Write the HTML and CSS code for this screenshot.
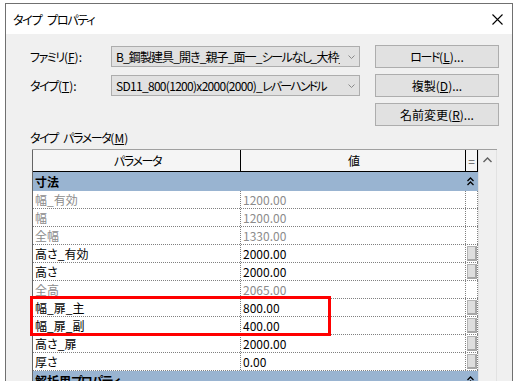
FILE: index.html
```html
<!DOCTYPE html>
<html lang="ja">
<head>
  <meta charset="UTF-8" />
  <title>タイプ プロパティ</title>
  <link rel="stylesheet" href="styles.css">
</head>
<body>

  <div class="window">
    <div class="titlebar">
      <span class="title">タイプ プロパティ</span>
      <svg class="close" width="11" height="11" viewBox="0 0 11 11"><path d="M0.5 0.5 L10.5 10.5 M10.5 0.5 L0.5 10.5" stroke="#000" stroke-width="1.1" fill="none"/></svg>
    </div>

    <div class="content">
      <div class="selectors">
        <label><span class="kn">ファミリ</span>(<u>F</u>):</label>
        <div class="combo">
          <span class="combo-text tight">B_鋼製建具_開き_親子_面一_<span class="kn">シールなし</span>_大枠_枠見込100</span>
          <svg class="chev" width="7" height="4" viewBox="0 0 7 4"><path d="M0.5 0.5 L3.5 3.5 L6.5 0.5" stroke="#8a8a8a" fill="none"/></svg>
        </div>
        <button class="btn"><span class="kn">ロード</span>(<u>L</u>)...</button>

        <label><span class="kn">タイプ</span>(<u>T</u>):</label>
        <div class="combo">
          <span class="combo-text latin">SD11_800(1200)x2000(2000)_<span class="kn">レバーハンドル</span></span>
          <svg class="chev" width="7" height="4" viewBox="0 0 7 4"><path d="M0.5 0.5 L3.5 3.5 L6.5 0.5" stroke="#8a8a8a" fill="none"/></svg>
        </div>
        <button class="btn">複製(<u>D</u>)...</button>

        <span></span>
        <span></span>
        <button class="btn">名前変更(<u>R</u>)...</button>
      </div>

      <div class="section-label"><span class="kn spaced">タイプ パラメータ</span>(<u>M</u>)</div>

      <div class="grid-wrap">
        <div class="grid">
          <div class="row head">
            <div class="c-name"><span class="kn">パラメータ</span></div>
            <div class="c-val">値</div>
            <div class="c-eq">=</div>
          </div>

          <div class="row group">
            <span>寸法</span>
            <svg class="collapse" width="7" height="9" viewBox="0 0 7 9"><path d="M0.5 4 L3.5 1 L6.5 4 M0.5 8 L3.5 5 L6.5 8" stroke="#000" stroke-width="1.3" fill="none"/></svg>
          </div>

          <div class="row ro"><div class="c-name">幅_有効</div><div class="c-val">1200.00</div><div class="c-eq"></div></div>
          <div class="row ro"><div class="c-name">幅</div><div class="c-val">1200.00</div><div class="c-eq"></div></div>
          <div class="row ro"><div class="c-name">全幅</div><div class="c-val">1330.00</div><div class="c-eq"></div></div>
          <div class="row"><div class="c-name">高さ_有効</div><div class="c-val">2000.00</div><div class="c-eq"><i class="assoc"></i></div></div>
          <div class="row"><div class="c-name">高さ</div><div class="c-val">2000.00</div><div class="c-eq"><i class="assoc"></i></div></div>
          <div class="row ro"><div class="c-name">全高</div><div class="c-val">2065.00</div><div class="c-eq"></div></div>
          <div class="row"><div class="c-name">幅_扉_主</div><div class="c-val">800.00</div><div class="c-eq"><i class="assoc"></i></div></div>
          <div class="row"><div class="c-name">幅_扉_副</div><div class="c-val">400.00</div><div class="c-eq"><i class="assoc"></i></div></div>
          <div class="row"><div class="c-name">高さ_扉</div><div class="c-val">2000.00</div><div class="c-eq"><i class="assoc"></i></div></div>
          <div class="row"><div class="c-name">厚さ</div><div class="c-val">0.00</div><div class="c-eq"><i class="assoc"></i></div></div>

          <div class="row group">
            <span>解析用<span class="kn">プロパティ</span></span>
            <svg class="collapse" width="7" height="9" viewBox="0 0 7 9"><path d="M0.5 4 L3.5 1 L6.5 4 M0.5 8 L3.5 5 L6.5 8" stroke="#000" stroke-width="1.3" fill="none"/></svg>
          </div>

          <div class="highlight"></div>
        </div>

        <div class="vscroll">
          <svg width="9" height="6" viewBox="0 0 9 6"><path d="M0.5 5 L4.5 1 L8.5 5" stroke="#606060" stroke-width="1.4" fill="none"/></svg>
        </div>
      </div>
    </div>
  </div>

</body>
</html>
```

FILE: styles.css
```css
body {
  margin: 0;
  height: 381px;
  overflow: hidden;
  background: #ffffff;
  font-family: "Noto Sans CJK JP", "Noto Sans", sans-serif;
  font-size: 12px;
  color: #000;
}
.window {
  margin: 3px 0 0 5px;
  width: 506px;
  height: 420px;
  border: 1px solid #707070;
  background: #f0f0f0;
  font-feature-settings: "palt";
}
.titlebar {
  height: 30px;
  background: #ffffff;
  display: flex;
  align-items: center;
  justify-content: space-between;
  padding: 0 9px 0 7px;
}
.title {
  letter-spacing: -1.2px;
  word-spacing: 4px;
}
/* kana in the UI font are much narrower than in Noto */
.kn {
  letter-spacing: -1.4px;
}
.spaced {
  word-spacing: 4px;
}
.tight {
  letter-spacing: -0.9px;
}
.latin {
  letter-spacing: -0.7px;
}
.latin .kn {
  letter-spacing: -1.8px;
}
.content {
  padding: 11px 0 0 24px;
}
.selectors {
  display: grid;
  grid-template-columns: 66px 249px 124px;
  grid-auto-rows: 23px;
  column-gap: 15px;
  row-gap: 6px;
  align-items: center;
}
.combo {
  height: 21px;
  box-sizing: border-box;
  border: 1px solid #adadad;
  background: #e1e1e1;
  display: flex;
  align-items: center;
  padding: 0 4px 0 4px;
}
.combo-text {
  flex: 1;
  overflow: hidden;
  white-space: nowrap;
}
.chev {
  margin-left: 8px;
}
.btn {
  height: 23px;
  border: 1px solid #adadad;
  background: #e1e1e1;
  font: inherit;
  color: #000;
  padding: 0;
}
.section-label {
  line-height: 16px;
  margin: 4px 0 3px;
}
.grid-wrap {
  display: flex;
  margin-left: 2px;
  border-top: 1px solid #a0a0a0;
  width: 465px;
}
.grid {
  position: relative;
  width: 445px;
  border-left: 1px solid #646464;
  background: #ffffff;
}
.row {
  display: flex;
  height: 17px;
  line-height: 17px;
  border-bottom: 1px dotted #808080;
}
.c-name {
  width: 205px;
  padding-left: 2px;
  border-right: 1px dotted #808080;
  white-space: nowrap;
}
.c-val {
  width: 222px;
  padding-left: 2px;
  border-right: 1px dotted #808080;
}
.c-eq {
  width: 11px;
  border-right: 1px dotted #808080;
  position: relative;
}
.ro {
  color: #8c8c8c;
}
.head {
  height: 21px;
  line-height: 21px;
  background: #f5f5f5;
  border-bottom: 1px solid #000;
}
.head .c-name,
.head .c-val,
.head .c-eq {
  text-align: center;
  border-right: 1px solid #000;
}
.head .c-eq {
  color: #555;
}
.group {
  height: 19px;
  line-height: 19px;
  background: #99b4d1;
  border-bottom: none;
  justify-content: space-between;
  align-items: center;
  padding: 0 4px 0 2px;
  font-weight: bold;
}
.collapse {
  display: block;
}
.assoc {
  position: absolute;
  left: 1px;
  top: 1px;
  width: 7px;
  height: 12px;
  background: #dedede;
  border: 1px solid #b4b4b4;
  border-right: 2px solid #a6a6a6;
  border-bottom: 2px solid #a6a6a6;
}
.highlight {
  position: absolute;
  left: -3px;
  top: 146px;
  width: 295px;
  height: 34px;
  border: 3px solid #ff0000;
}
.vscroll {
  width: 17px;
  border-left: 1px solid #e2e2e2;
  border-right: 1px solid #e2e2e2;
  background: #f0f0f0;
  display: flex;
  justify-content: center;
  padding-top: 7px;
  align-items: flex-start;
}
```
